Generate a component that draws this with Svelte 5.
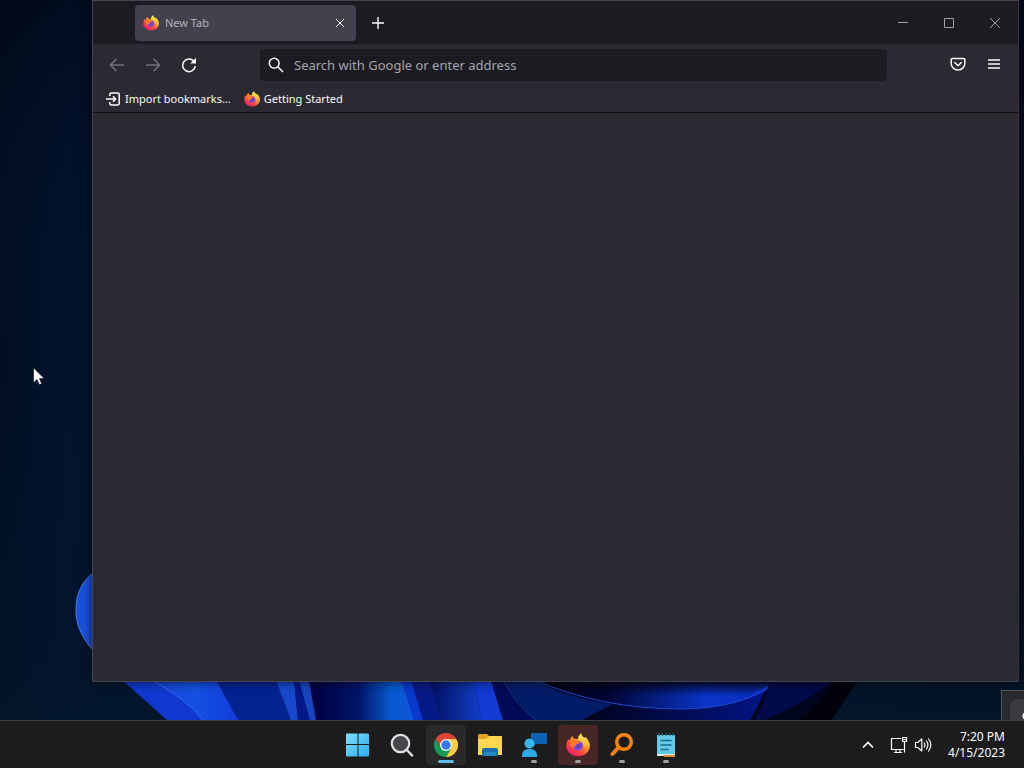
<script>
  let address = $state('');
</script>

{#snippet firefox(size)}
  <svg class="solid" width={size} height={size} viewBox="0 0 32 32" aria-hidden="true">
    <path fill="url(#fx-body)" d="M16 31C7.500 31 .5 25 .5 17c0-3.600 1-6.500 3-9 .2 1 .5 1.800 1 2.300C5.300 7.500 7 5 9.300 3.500c-.2 1.700.3 3 1.300 4 2-.2 3.800.2 5.400 1.200 0-3.200 1.200-6 4.200-8.200.3 3 2.300 4.500 4.500 6.500l.8-1.700C29.500 9 31.500 12.500 31.500 17c0 8-7 14-15.500 14z"/>
    <path fill="url(#fx-flame)" d="M20.200.5c.3 3 2.300 4.500 4.500 6.500l.8-1.700C29.500 9 31.500 12.500 31.500 17c0 6-4 10.500-9 12.700C26 25 26.500 19 23 14.500c-2-2.300-5-2.300-7-5.800 0-3.200 1.200-6 4.200-8.200z"/>
    <circle cx="16" cy="17" r="6.500" fill="url(#fx-core)"/>
    <path fill="#ff7a2a" d="M5.500 11.500C8 8.300 11.500 7.800 15 10.300c.8 1 2 1.500 3.500 1.700-.3 1.800-2 2.200-3.500 2.800-1.400.6-1.800 1.400-1.500 2.700-2-.4-4 .5-4 3.500C7 19 5.500 15.500 5.500 11.500z"/>
  </svg>
{/snippet}

<div class="screen">
  <main class="desktop">
    <svg class="wallpaper" viewBox="0 0 1024 720" preserveAspectRatio="none" aria-hidden="true">
      <defs>
        <linearGradient id="fx-body" x1="0.900" y1="0" x2="0.200" y2="1">
          <stop offset="0" stop-color="#ffe64a"/><stop offset="0.400" stop-color="#ff9b25"/>
          <stop offset="0.700" stop-color="#ff453d"/><stop offset="1" stop-color="#e31587"/>
        </linearGradient>
        <linearGradient id="fx-flame" x1="0.500" y1="0" x2="0.400" y2="1">
          <stop offset="0" stop-color="#fff45a"/><stop offset="0.500" stop-color="#ffb52d"/><stop offset="1" stop-color="#ff5040"/>
        </linearGradient>
        <radialGradient id="fx-core"><stop offset="0" stop-color="#5140c9"/><stop offset="1" stop-color="#8f45d8"/></radialGradient>
        <linearGradient id="sky"><stop offset="0" stop-color="#020e20"/><stop offset="0.070" stop-color="#03142f"/><stop offset="0.500" stop-color="#00102b"/><stop offset="1" stop-color="#020d20"/></linearGradient>
        <linearGradient id="sky-low" x2="0" y2="1"><stop offset="0" stop-color="#010818" stop-opacity="0.700"/><stop offset="0.500" stop-color="#03142f" stop-opacity="0"/><stop offset="1" stop-color="#03172b" stop-opacity="0.800"/></linearGradient>
        <linearGradient id="petal"><stop offset="0" stop-color="#1743d6"/><stop offset="0.500" stop-color="#1552e2"/><stop offset="1" stop-color="#123cdb"/></linearGradient>
        <linearGradient id="glow"><stop offset="0" stop-color="#00003c"/><stop offset="0.450" stop-color="#00146a"/><stop offset="0.750" stop-color="#075bd0"/><stop offset="1" stop-color="#1054dc"/></linearGradient>
        <linearGradient id="fold"><stop offset="0" stop-color="#020f62"/><stop offset="1" stop-color="#123fc6"/></linearGradient>
        <linearGradient id="bowl"><stop offset="0" stop-color="#00020d"/><stop offset="0.300" stop-color="#000636"/><stop offset="0.700" stop-color="#0b35c9"/><stop offset="1" stop-color="#0a2bb5"/></linearGradient>
        <linearGradient id="bowl-shade" x2="0" y2="1"><stop offset="0" stop-color="#000318" stop-opacity="0.900"/><stop offset="1" stop-color="#000318" stop-opacity="0"/></linearGradient>
        <linearGradient id="under"><stop offset="0" stop-color="#00031a"/><stop offset="1" stop-color="#031488"/></linearGradient>
      </defs>
      <rect width="1024" height="720" fill="url(#sky)"/>
      <rect width="1024" height="720" fill="url(#sky-low)"/>
      <path d="M100 568C80 580 76 596 76 611s7 30 24 47z" fill="#1a51df" stroke="#4b7de8"/>
      <path d="M120 679h736c-9 17-17 28-24 41H168z" fill="#00051d"/>
      <path d="M122 680h95l22 40h-72z" fill="#1038ce"/>
      <path d="M151 680h65l22 40h-35q-19-23-52-40z" fill="url(#petal)"/>
      <path d="M151 680q33 17 52 40" stroke="#3469e8" fill="none"/>
      <path d="M216 680h61l16 40h-55z" fill="#022491"/>
      <path d="M276 680h18l4 40h-7z" fill="#1749ce"/>
      <path d="M294 680h6l14 40h-16z" fill="#021887"/>
      <path d="M299 680h10q6 24 7 40h-6z" fill="#1745bd"/>
      <path d="M309 680h97l13 40H316z" fill="url(#glow)"/>
      <path d="M401 680h10q12 24 12 40h-9z" fill="#0a38ca"/>
      <path d="M411 680h19l12 40h-19z" fill="#061a85"/>
      <path d="M430 680h44l7 40h-39z" fill="url(#fold)"/>
      <path d="M474 680h17l12 40h-22z" fill="#113bd2"/>
      <path d="M491 680h13q9 24 32 40h-33z" fill="#020b56"/>
      <path d="M504 680h31q34 17 78 24l-30 16h-47q-22-19-32-40z" fill="#031c68"/>
      <path d="M504 682q13 24 32 38" fill="none" stroke="#174098"/>
      <path d="M583 720q16-10 30-15 92 13 157-25-10 23-20 40z" fill="url(#under)"/>
      <path d="M535 680h245q-30 28-98 29-92 1-147-29z" fill="url(#bowl)"/>
      <path d="M535 680h245l-35 16H565z" fill="url(#bowl-shade)"/>
      <path d="M535 680q66 29 147 29 58-1 88-23" fill="none" stroke="#1d49c8"/>
      <path d="M770 680h64q-31 25-70 40h-9q10-19 15-40z" fill="#020a48"/>
      <path d="M834 681h24l-27 39h-32q22-15 35-39z" fill="#01020a"/>
    </svg>

    <aside class="peek" aria-label="Notification"><i></i></aside>

    <section class="window" aria-label="Browser">
      <header class="tabbar">
        <div class="tab">
          {@render firefox(16)}
          <span>New Tab</span>
          <button class="close-tab" aria-label="Close tab"><svg width="10" height="10" viewBox="0 0 10 10"><path d="m1 1 8 8m0-8L1 9"/></svg></button>
        </div>
        <button class="new-tab" aria-label="Open a new tab"><svg width="14" height="14" viewBox="0 0 14 14"><path d="M7 1v12M1 7h12" stroke-width="1.400"/></svg></button>
        <div class="controls">
          <button aria-label="Minimize"><svg width="12" height="12" viewBox="0 0 12 12"><path d="M1 5.500h10"/></svg></button>
          <button aria-label="Maximize"><svg width="12" height="12" viewBox="0 0 12 12"><path d="M1.500 1.500h9v9h-9z"/></svg></button>
          <button aria-label="Close"><svg width="12" height="12" viewBox="0 0 12 12"><path d="m1 1 10 10m0-10L1 11"/></svg></button>
        </div>
      </header>

      <nav class="toolbar">
        <button class="dim" aria-label="Back"><svg width="16" height="16" viewBox="0 0 16 16"><path d="M15 8H1.500m6-6.200L1.500 8l6 6.200" stroke-width="1.500"/></svg></button>
        <button class="dim" aria-label="Forward"><svg width="16" height="16" viewBox="0 0 16 16"><path d="M1 8h13.500m-6-6.200 6 6.200-6 6.200" stroke-width="1.500"/></svg></button>
        <button aria-label="Reload"><svg width="16" height="16" viewBox="0 0 16 16"><path d="M12.800 4.200A6.300 6.300 0 1 0 14.300 9" stroke-width="1.500"/><path d="M15 .8v5.700H9.300z" fill="currentColor" stroke="none"/></svg></button>
        <label class="urlbar">
          <svg width="16" height="16" viewBox="0 0 16 16"><circle cx="6.200" cy="6.200" r="4.900" stroke-width="1.500"/><path d="m9.800 9.800 5.200 5.200" stroke-width="1.500"/></svg>
          <input type="text" bind:value={address} placeholder="Search with Google or enter address" aria-label="Search with Google or enter address"/>
        </label>
        <button aria-label="Save to Pocket"><svg width="16" height="16" viewBox="0 0 16 16"><path d="M2.500 1.500h11a1.300 1.300 0 0 1 1.300 1.300v3.700a6.800 6.500 0 0 1-13.600 0V2.800a1.300 1.300 0 0 1 1.300-1.300zm2.200 4L8 8.700l3.300-3.200" stroke-width="1.500" stroke-linecap="round" stroke-linejoin="round"/></svg></button>
        <button aria-label="Menu"><svg width="16" height="16" viewBox="0 0 16 16"><path d="M2 3h12M2 7h12M2 11h12" stroke-width="1.400"/></svg></button>
      </nav>

      <div class="bookmarks">
        <button><svg width="16" height="16" viewBox="0 0 16 16"><path d="M4.800 5V3.500A1.500 1.500 0 0 1 6.300 2h6.400a1.500 1.500 0 0 1 1.500 1.500v9a1.500 1.500 0 0 1-1.500 1.500H6.300a1.500 1.500 0 0 1-1.500-1.500V11M1 8h9.500M8 5.200 10.700 8 8 10.800" stroke-width="1.500"/></svg>Import bookmarks...</button>
        <button>{@render firefox(16)}Getting Started</button>
      </div>
      <div class="page"></div>
    </section>

    <svg class="cursor" width="12" height="19" viewBox="0 0 12 19" aria-hidden="true"><path d="M.5.800v15l3.500-3.300 2.400 5.300 2.300-1-2.300-5.200h4.800z" fill="#fff" stroke="#05080f" stroke-width=".6"/></svg>
  </main>

  <footer class="taskbar">
    <div class="apps">
      <button aria-label="Start"><svg class="solid" width="24" height="24" viewBox="0 0 24 24"><defs><linearGradient id="win" x2="1" y2="1"><stop offset="0" stop-color="#82dcff"/><stop offset="1" stop-color="#28adef"/></linearGradient></defs><path fill="url(#win)" d="M1 .5h10.500V11H0V1.500Q0 .5 1 .500zM12.500.5H22q1 0 1 1V11H12.500zM0 12h11.500v11.500H1q-1 0-1-1zm12.500 0H23v10.500q0 1-1 1h-9.500z"/></svg></button>
      <button aria-label="Search"><svg width="24" height="24" viewBox="0 0 24 24"><circle cx="10.500" cy="10.500" r="8.700" fill="#46484b" stroke="#e0e0e0" stroke-width="2.200"/><path d="m16.500 16.500 5.500 6" stroke="#e0e0e0" stroke-width="2.500" stroke-linecap="round"/></svg></button>
      <button class="open current" aria-label="Chrome"><svg class="solid" width="24" height="24" viewBox="0 0 24 24"><path fill="#db4437" d="M1.600 6A12 12 0 0 1 22.400 6H12l-5.200 9z"/><path fill="#ffcd40" d="M22.400 6A12 12 0 0 1 12 24l5.200-9L12 6z"/><path fill="#0f9d58" d="M12 24A12 12 0 0 1 1.600 6l5.200 9h10.400z"/><circle cx="12" cy="12" r="6" fill="#f5f6fa"/><circle cx="12" cy="12" r="4.700" fill="#3478ee"/></svg></button>
      <button aria-label="File Explorer"><svg class="solid" width="26" height="24" viewBox="0 0 26 24"><path fill="#e4a31c" d="M1 2.500Q1 1 2.500 1H10l3 3-3 4H1z"/><path fill="#ffd64f" d="M12.500 3H24q1 0 1 1v18H1V6h8z"/><path fill="#176eb2" d="M5 23v-6q0-2 2-2h12q2 0 2 2v6z"/><path fill="#2487c6" d="M7 23v-3q0-1 1-1h10q1 0 1 1v3z"/></svg></button>
      <button class="open" aria-label="Remote assistance"><svg class="solid" width="26" height="26" viewBox="0 0 26 26"><path fill="#0a63b0" d="M10 1h16v11H15l-3 3v-3h-2z"/><circle cx="8.500" cy="11.500" r="5" fill="#39b4ed"/><path fill="#2ca9e8" d="M1 25v-2a6 6 0 0 1 6-6h3a6 6 0 0 1 6 6v2z"/></svg></button>
      <button class="open alert" aria-label="Firefox">{@render firefox(24)}</button>
      <button class="open" aria-label="Finder"><svg width="24" height="24" viewBox="0 0 24 24"><circle cx="14" cy="9" r="7.300" stroke="#f5820c" stroke-width="3.600"/><path d="m8.500 14.500-6 6.500" stroke="#f5820c" stroke-width="4" stroke-linecap="round"/></svg></button>
      <button class="open" aria-label="Notepad"><svg width="20" height="24" viewBox="0 0 20 24"><g stroke="none"><path fill="#64c9e7" d="M1 2h18v20H1z"/><path fill="#e9edf0" d="M1 21h18v2H1z"/><path fill="#d88a2b" d="M8 22h11v2H8z"/></g><path d="M3 0v3m3.500-3v3M10 0v3m3.500-3v3M17 0v3" stroke="#1b6987"/><path d="M4.500 7.500h11m-11 4.500h11m-11 4.500h8" stroke="#176c91" stroke-width="1.700"/></svg></button>
    </div>

    <div class="tray">
      <button aria-label="Show hidden icons"><svg width="12" height="12" viewBox="0 0 12 12"><path d="m1 8.500 5-5 5 5" stroke-width="1.700"/></svg></button>
      <button class="status" aria-label="Network and volume">
        <svg width="18" height="18" viewBox="0 0 18 18"><path d="M11 2.500H1.500v11h12M4 16.500h8m-6-3v3m4-3v3M12.500 1.500h4v4h-4zM12.500 3.500h4M14.500 5.500v11" stroke-width="1.200"/></svg>
        <svg width="18" height="18" viewBox="0 0 18 18"><path d="M1.500 6.500h2.300l4-3.500v12l-4-3.500H1.500zM10 6.500q1.800 2.500 0 5M12.200 4.500q3.400 4.500 0 9M14.300 2.500q5 6.500 0 13" stroke-width="1.200" stroke-linejoin="round"/></svg>
      </button>
      <button class="clock"><span>7:20 PM</span><span>4/15/2023</span></button>
    </div>
  </footer>
</div>

<style>
  :global(body) { margin: 0; background: #03142f; }
  .screen { min-height: 100vh; display: flex; flex-direction: column; font-family: "Noto Sans", "Open Sans", sans-serif; font-size: 11px; color: #fbfbfe; overflow: hidden; }
  button { border: 0; padding: 0; margin: 0; background: none; color: inherit; font: inherit; display: flex; align-items: center; justify-content: center; }
  svg { display: block; flex: none; fill: none; stroke: currentColor; }
  svg.solid { stroke: none; }
  .desktop { flex: 1; position: relative; overflow: hidden; }
  .wallpaper { position: absolute; width: 100%; height: 100%; stroke: none; }
  .window { position: absolute; top: 0; left: 92px; right: 5px; bottom: 38px; box-sizing: border-box; border: 1px solid #45454f; border-right-color: #34343d; display: flex; flex-direction: column; background: #2b2a33; box-shadow: 0 0 10px #000a; }
  .tabbar { height: 43px; display: flex; align-items: center; background: #1c1b22; padding-left: 42px; }
  .tab { width: 221px; height: 36px; box-sizing: border-box; padding: 0 8px; border-radius: 4px; background: #42414d; display: flex; align-items: center; gap: 6px; color: #b3b2bb; }
  .tab span { flex: 1; }
  .close-tab { width: 16px; height: 24px; color: #fbfbfe; }
  .new-tab { width: 36px; height: 36px; margin-left: 4px; }
  .controls { margin-left: auto; align-self: stretch; display: flex; color: #a09fa5; }
  .controls button { width: 46px; }
  .toolbar { height: 41px; padding: 0 6px; display: flex; align-items: center; }
  .toolbar button { width: 36px; height: 36px; }
  .toolbar .dim { color: #74737b; }
  .urlbar { flex: 1; margin: 0 53px; height: 32px; border-radius: 4px; background: #1c1b22; display: flex; align-items: center; gap: 8px; padding: 0 8px; }
  .urlbar input { flex: 1; min-width: 0; height: 24px; padding: 0 2px; border: 0; outline: 0; background: none; color: #fbfbfe; font: inherit; font-size: 13px; }
  .urlbar input::placeholder { color: #a5a4ab; opacity: 1; }
  .bookmarks { height: 27px; padding: 0 12px; display: flex; align-items: center; gap: 13px; border-bottom: 1px solid #0c0c0d; }
  .bookmarks button { gap: 4px; height: 24px; }
  .page { flex: 1; background: #2b2a33; }
  .peek { position: absolute; right: 0; bottom: 0; width: 22px; height: 29px; border: solid #54565c; border-width: 1px 0 0 1px; background: #292a2e; overflow: hidden; }
  .peek i { position: absolute; left: 8px; top: 8px; width: 34px; height: 34px; border-radius: 8px; background: radial-gradient(circle, #fff 4px, #3b3c3f 5px); }
  .cursor { position: absolute; left: 33px; top: 367px; }
  .taskbar { height: 47px; border-top: 1px solid #3e3e42; background: #1c1c1c; display: grid; grid-template-columns: 1fr auto 1fr; align-items: center; }
  .apps { grid-column: 2; display: flex; gap: 4px; }
  .apps button { width: 40px; height: 40px; border-radius: 4px; position: relative; }
  .apps .current { background: #292929; }
  .apps .alert { background: #472628; }
  .apps .open::after { content: ""; position: absolute; bottom: 2px; left: 17px; width: 6px; height: 3px; border-radius: 2px; background: #a0a0a0; }
  .apps .current::after { left: 12px; width: 16px; background: #5dbbed; }
  .tray { justify-self: end; display: flex; align-items: center; padding-right: 19px; gap: 16px; }
  .status { gap: 6px; }
  .clock { flex-direction: column; align-items: flex-end; font-size: 12px; line-height: 16px; }
</style>
